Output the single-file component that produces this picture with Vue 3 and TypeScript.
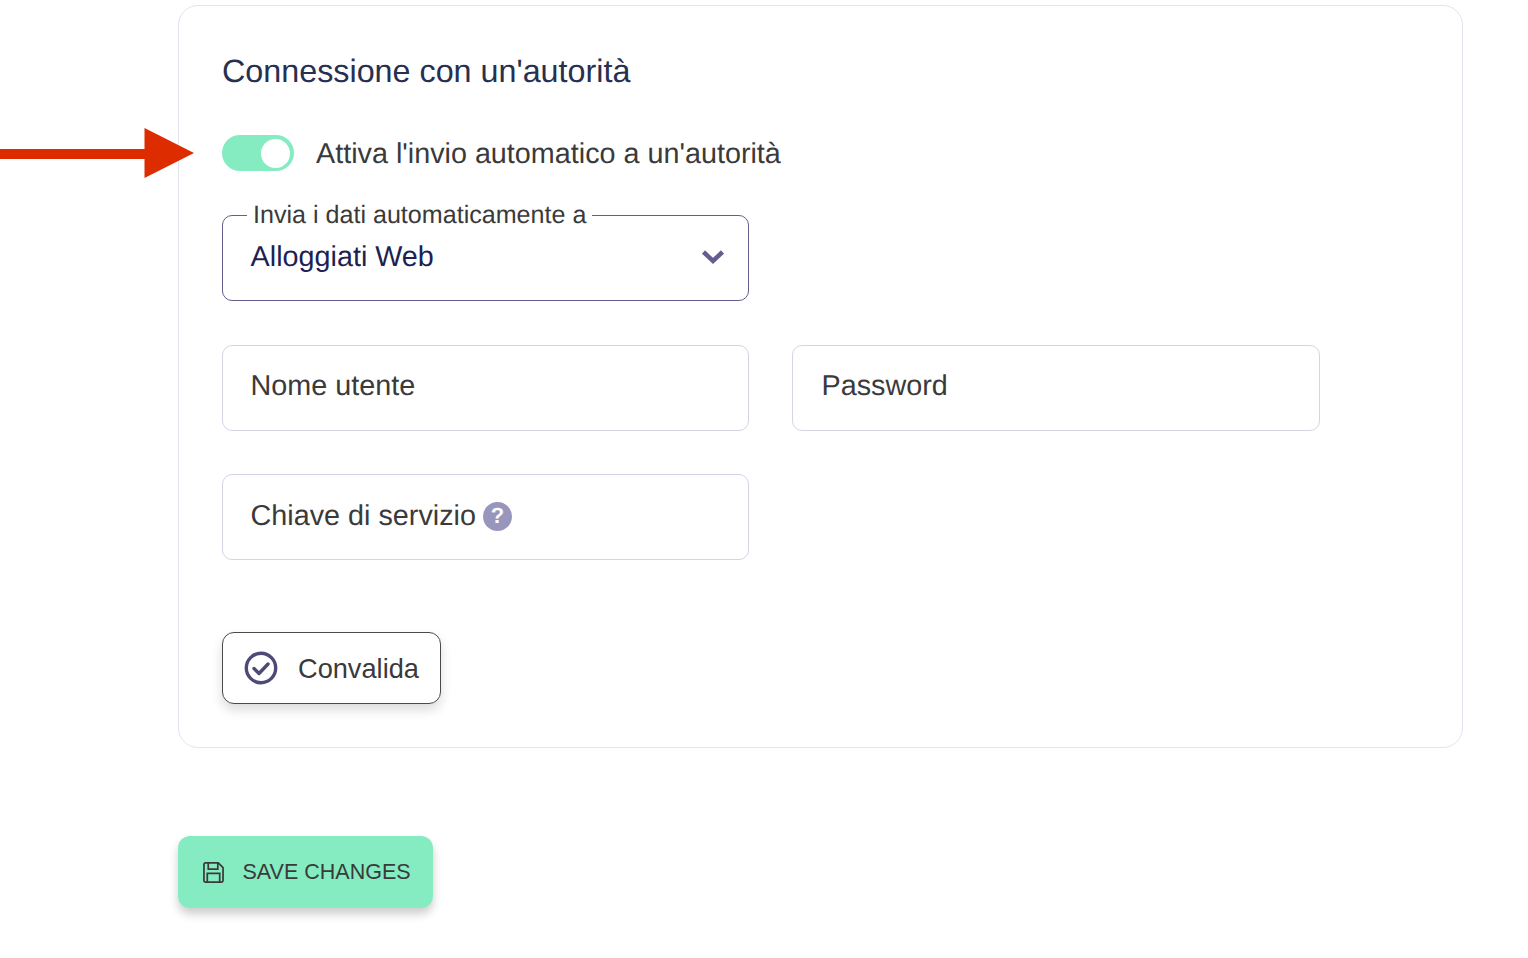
<script setup lang="ts">
import { ref } from 'vue';

const enabled = ref(true);
const authority = ref('Alloggiati Web');
</script>

<template>
  <div class="page">
    <svg class="arrow" width="195" height="50" viewBox="0 0 195 50">
      <path d="M0 21h144.500V0l49.500 25-49.500 25V31H0z" fill="#dd2c00" />
    </svg>

    <section class="card">
      <h2 class="card__title">Connessione con un'autorità</h2>

      <div class="toggle-row" @click="enabled = !enabled">
        <span class="toggle" :class="{ 'toggle--on': enabled }"><span class="toggle__knob"></span></span>
        <span class="toggle-row__label">Attiva l'invio automatico a un'autorità</span>
      </div>

      <div class="fields">
        <div class="field field--select">
          <span class="field__legend">Invia i dati automaticamente a</span>
          <span class="field__value">{{ authority }}</span>
          <svg class="field__chevron" width="24" height="16" viewBox="0 0 24 16">
            <path d="M2.500 3 12 12l9.500-9" fill="none" stroke="#645d8f" stroke-width="4.500" />
          </svg>
        </div>
        <div></div>

        <div class="field"><span class="field__text">Nome utente</span></div>
        <div class="field field--right"><span class="field__text">Password</span></div>

        <div class="field">
          <span class="field__text">Chiave di servizio</span>
          <span class="help">?</span>
        </div>
      </div>

      <button type="button" class="btn-validate">
        <svg width="34" height="34" viewBox="0 0 34 34">
          <circle cx="17" cy="17" r="14.700" fill="none" stroke="#4d4a78" stroke-width="3.400" />
          <path d="M10 17.500l5 5 9-9.500" fill="none" stroke="#4d4a78" stroke-width="3.400" stroke-linecap="round" stroke-linejoin="round" />
        </svg>
        <span class="btn-validate__text">Convalida</span>
      </button>
    </section>

    <button type="button" class="btn-save">
      <svg width="21" height="21" viewBox="0 0 22 22">
        <path d="M2.500 1h13.500l5 5v13.500a1.500 1.500 0 0 1-1.500 1.500H2.500A1.500 1.500 0 0 1 1 19.500v-17A1.500 1.500 0 0 1 2.500 1z" fill="none" stroke="#3a3a3a" stroke-width="1.800" />
        <path d="M5.500 1v6.500h10V1M4.500 21v-9h13v9" fill="none" stroke="#3a3a3a" stroke-width="1.800" />
      </svg>
      SAVE CHANGES
    </button>
  </div>
</template>

<style scoped>
.page {
  position: relative;
  height: 958px;
  box-sizing: border-box;
  padding: 5px 65px 0 178px;
  font-family: "Liberation Sans", Arial, sans-serif;
  color: #3a3a3a;
  text-rendering: geometricPrecision;
  overflow: hidden;
}

.arrow {
  position: absolute;
  left: 0;
  top: 128px;
}

.card {
  box-sizing: border-box;
  width: 1285px;
  height: 743px;
  padding: 43px;
  border: 1px solid #e4e3ee;
  border-radius: 20px;
  background: #fff;
}

.card__title {
  margin: 0;
  font-size: 32.300px;
  line-height: 44px;
  font-weight: 400;
  color: #27304f;
}

.toggle-row {
  display: flex;
  align-items: center;
  gap: 22px;
  height: 36px;
  margin-top: 42px;
  cursor: pointer;
}

.toggle-row__label {
  padding-top: 2px;
  font-size: 28.750px;
  line-height: 34px;
}

.toggle {
  display: flex;
  align-items: center;
  width: 72px;
  height: 36px;
  padding: 0 4px;
  box-sizing: border-box;
  border-radius: 18px;
  background: #85ecc2;
  justify-content: flex-start;
}

.toggle--on {
  justify-content: flex-end;
}

.toggle__knob {
  width: 29px;
  height: 29px;
  border-radius: 50%;
  background: #fff;
}

.fields {
  display: grid;
  grid-template-columns: 527px 528px;
  grid-auto-rows: 86px;
  column-gap: 43px;
  row-gap: 43.500px;
  margin-top: 44px;
}

.field {
  position: relative;
  display: flex;
  align-items: center;
  gap: 7px;
  box-sizing: border-box;
  padding: 0 27.600px;
  border: 1px solid #d5d3e4;
  border-radius: 10px;
  font-size: 28.750px;
}

.field--right {
  padding-left: 28.500px;
}

.field--select {
  justify-content: space-between;
  padding-right: 23.500px;
  border-color: #645d8f;
}

.field__legend {
  position: absolute;
  left: 24px;
  top: -16px;
  padding: 0 6px;
  background: #fff;
  font-size: 25.100px;
  line-height: 30px;
}

.field__value {
  color: #211f52;
  margin-top: -1px;
}

.field__text {
  margin-top: -2px;
}

.field__chevron {
  margin-top: -3px;
}

.help {
  display: flex;
  align-items: center;
  justify-content: center;
  width: 29px;
  height: 29px;
  margin-top: -2px;
  border-radius: 50%;
  background: #9896bd;
  color: #fff;
  font-size: 22px;
  font-weight: 700;
}

.btn-validate {
  display: flex;
  align-items: center;
  gap: 20px;
  box-sizing: border-box;
  width: 219px;
  height: 72px;
  margin-top: 72px;
  padding: 0 0 0 21px;
  border: 1px solid #4a4a4a;
  border-radius: 12px;
  background: #fff;
  box-shadow: 0 6px 12px rgba(0, 0, 0, 0.14);
  color: #3a3a3a;
  font-family: inherit;
  font-size: 27.200px;
  cursor: pointer;
}

.btn-validate__text {
  margin-top: 2px;
}

.btn-save {
  display: flex;
  align-items: center;
  gap: 18.500px;
  box-sizing: border-box;
  width: 255px;
  height: 72px;
  margin-top: 88px;
  padding: 0 0 0 25px;
  border: none;
  border-radius: 12px;
  background: #85ecc2;
  box-shadow: 0 6px 10px rgba(0, 0, 0, 0.2);
  color: #3a3a3a;
  font-family: inherit;
  font-size: 21.500px;
  cursor: pointer;
}
</style>
